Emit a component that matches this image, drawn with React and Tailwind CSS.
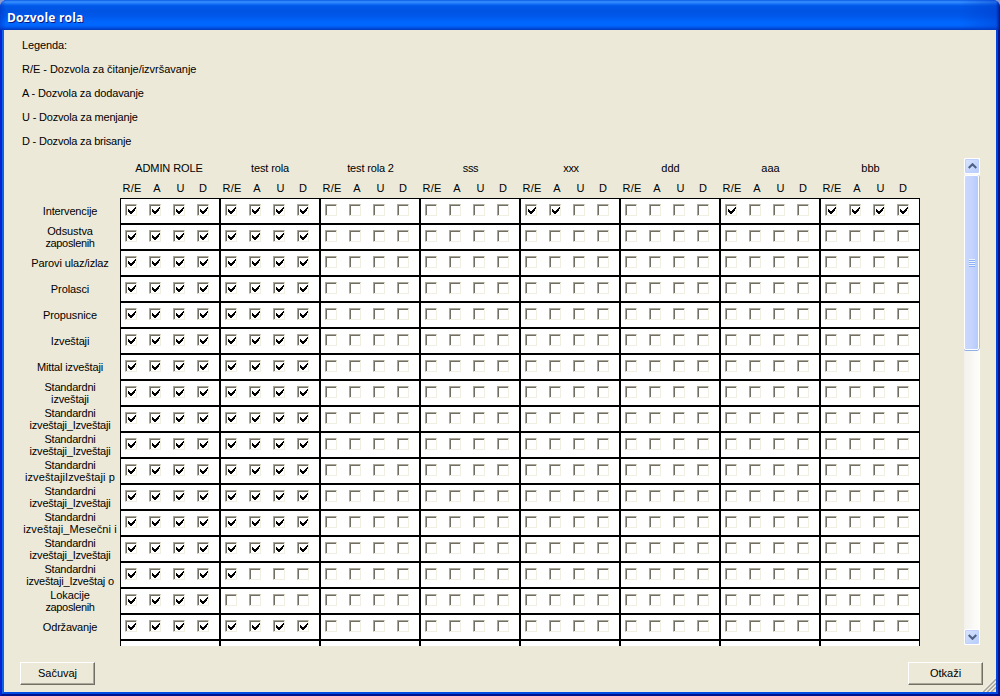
import React from "react";

const ROLES = [
  ["ADMIN ROLE", "pr-0.5 tracking-[-0.1px]"],
  ["test rola", "tracking-[-0.15px]"],
  ["test rola 2", "pl-px tracking-[-0.15px]"],
  ["sss", "pl-px tracking-[-0.4px]"],
  ["xxx", "pl-0.5 tracking-[-0.3px]"],
  ["ddd", "pl-px"],
  ["aaa", "pl-px"],
  ["bbb", "pl-px"],
];
const E = "0000";
const FULL = "1111";
const STANDARD = ["Standardni", "tracking-[-0.2px]"];
const REPORTS = ["izveštaji_Izveštaji", "tracking-[-0.22px]"];
const EMPLOYEES = ["zaposlenih", "tracking-[-0.35px]"];

const ROWS = [
  { lines: [["Intervencije", "tracking-[-0.15px]"]], marks: [FULL, FULL, E, E, "1100", E, "1000", FULL] },
  { lines: [["Odsustva", "tracking-[-0.1px]"], EMPLOYEES], marks: [FULL, FULL] },
  { lines: [["Parovi ulaz/izlaz", "tracking-[-0.12px]"]], marks: [FULL, FULL] },
  { lines: [["Prolasci", "tracking-[-0.1px]"]], marks: [FULL, FULL] },
  { lines: [["Propusnice", "tracking-[-0.1px]"]], marks: [FULL, FULL] },
  { lines: [["Izveštaji", "tracking-[-0.15px]"]], marks: [FULL, FULL] },
  { lines: [["Mittal izveštaji", "tracking-[-0.15px]"]], marks: [FULL, FULL] },
  { lines: [STANDARD, ["izveštaji", "tracking-[-0.15px]"]], marks: [FULL, FULL] },
  { lines: [STANDARD, REPORTS], marks: [FULL, FULL] },
  { lines: [STANDARD, REPORTS], marks: [FULL, FULL] },
  { lines: [STANDARD, ["izveštajiIzveštaji p", "tracking-[0.1px]"]], marks: [FULL, FULL] },
  { lines: [STANDARD, REPORTS], marks: [FULL, FULL] },
  { lines: [STANDARD, ["izveštaji_Mesečni i", "tracking-[0.1px]"]], marks: [FULL, FULL] },
  { lines: [STANDARD, REPORTS], marks: [FULL, FULL] },
  { lines: [STANDARD, ["izveštaji_Izveštaj o", "tracking-[-0.2px]"]], marks: [FULL, "1000"] },
  { lines: [["Lokacije", "tracking-[-0.1px]"], EMPLOYEES], marks: [FULL, E] },
  { lines: [["Održavanje", "tracking-[-0.2px]"]], marks: [FULL, FULL] },
  { lines: [], marks: [E, E], blank: true },
];

function Check({ on }) {
  return (
    <span className="block size-3 border border-t-[#aca899] border-l-[#aca899] border-r-[#f1efe2] border-b-[#f1efe2] bg-white">
      <span className="block size-[10px] border-t border-l border-[#716f64]">
        {on && (
          <svg className="ml-px mt-px block" width="8" height="7" viewBox="0 0 8 7" shapeRendering="crispEdges">
            <path d="M0 2h1v1h1v1h2v-1h1v-1h1v-1h1v-1h1v2h-1v2h-1v1h-1v1h-1v1h-2v-1h-1v-1h-1z" fill="#000" />
          </svg>
        )}
      </span>
    </span>
  );
}

function Cell({ marks, blank }) {
  return (
    <div className="flex h-[26px] w-[100px] gap-3 border border-black bg-white pl-1 pt-[5px]">
      {!blank && marks.split("").map((m, i) => <Check key={i} on={m === "1"} />)}
    </div>
  );
}

function RoleHeader({ name, className }) {
  return (
    <div className="w-[100px]">
      <div className={"h-5 text-center leading-5 " + className}>{name}</div>
      <div className="flex h-5 leading-5">
        <span className="w-6 text-center tracking-[0.2px]">R/E</span>
        <span className="w-[26px] text-center">A</span>
        <span className="w-[21px] text-center">U</span>
        <span className="w-6 text-center">D</span>
      </div>
    </div>
  );
}

function ScrollButton({ up }) {
  return (
    <div className="flex size-4 shrink-0 items-center justify-center rounded-[2px] border border-white bg-linear-to-br from-[#dbe5fe] to-[#b5cbfa] shadow-[inset_0_0_0_1px_#bfd0fd]">
      <svg width="9" height="6" viewBox="0 0 9 6">
        <path d={up ? "M.7 5L4.5 1.3L8.3 5" : "M.7 1L4.5 4.7L8.3 1"} fill="none" stroke="#4d6185" strokeWidth="2.2" />
      </svg>
    </div>
  );
}

function Scrollbar() {
  return (
    <div className="flex h-[487px] w-4 flex-col bg-linear-to-r from-[#f3f1ec] to-[#fefefb]">
      <ScrollButton up />
      <div className="mt-px flex h-[175px] w-[15px] flex-col items-center justify-center rounded-[2px] border border-white bg-linear-to-r from-[#c9d8fc] via-[#c5d4fd] to-[#b6cafa] shadow-[0_1px_0_#8fb0e2,1px_0_0_#a9c3ee]">
        {[0, 1, 2, 3].map((i) => (
          <span key={i} className="box-content h-px w-1.5 border-t border-[#eef4fe] bg-[#8cb0f8]" />
        ))}
      </div>
      <div className="grow" />
      <ScrollButton />
    </div>
  );
}

function Button({ children }) {
  return (
    <button className="flex h-[23px] w-[75px] items-center justify-center border border-t-white border-l-white border-r-[#716f64] border-b-[#716f64] bg-[#ece9d8] shadow-[inset_-1px_-1px_0_#aca899]">
      {children}
    </button>
  );
}

const LEGEND = [
  ["Legenda:", "tracking-[-0.1px]"],
  ["R/E - Dozvola za čitanje/izvršavanje", "tracking-[-0.03px]"],
  ["A - Dozvola za dodavanje", "tracking-[-0.12px]"],
  ["U - Dozvola za menjanje", "tracking-[-0.18px]"],
  ["D - Dozvola za brisanje", "tracking-[-0.2px]"],
];

export default function App() {
  return (
    <div className="h-[696px] w-[1000px] overflow-hidden bg-[#8a9bd0] font-['Liberation_Sans',Arial,sans-serif] text-[11px] text-black">
      <div className="flex h-full flex-col overflow-hidden rounded-t-[7px] bg-[#0831d9]">
        <header className="flex h-[30px] shrink-0 items-center bg-[linear-gradient(90deg,#0030c080_0px,#0030c000_6px,#0030c000_960px,#0038c870_996px,#001890_1000px),linear-gradient(180deg,#0a5ce6_0px,#3b91ff_2px,#1470f4_4px,#0058e8_6px,#0054e3_11px,#0057ea_16px,#0066fd_22px,#0068ff_25px,#005bf0_27px,#0042ce_29px,#003ab8_30px)] pl-[7px] pt-[5px]">
          <h1 className="whitespace-nowrap font-['Open_Sans',sans-serif] text-[12px] font-bold leading-4 tracking-[0.2px] text-white [text-shadow:1px_1px_0_#0a1883]">Dozvole rola</h1>
        </header>
        <div className="flex grow flex-col border-x-2 border-b-2 border-l-[#0424d0] border-r-[#00138c] border-b-[#00138c]">
          <div className="flex grow flex-col border-x-2 border-b-2 border-l-[#0f60e6] border-r-[#0044dc] border-b-[#004be4] bg-[#ece9d8]">
            <section className="flex h-[120px] flex-col pl-[18px] pt-[3px]">
              {LEGEND.map(([t, c]) => (
                <p key={t} className={"h-6 whitespace-nowrap leading-6 " + c}>{t}</p>
              ))}
            </section>
            <main className="mt-2 flex h-[488px] overflow-hidden">
              <div className="w-[916px]">
                <div className="flex h-10 pl-[116px]">
                  {ROLES.map(([r, c]) => <RoleHeader key={r} name={r} className={c} />)}
                </div>
                {ROWS.map((row, i) => (
                  <div key={i} className="flex h-[26px]">
                    <div className="flex w-[116px] flex-col justify-center pl-4 text-center leading-3">
                      {row.lines.map(([t, c], k) => (
                        <span key={k} className={"-mx-2 whitespace-nowrap " + c}>{t}</span>
                      ))}
                    </div>
                    {ROLES.map(([r], k) => <Cell key={r} marks={row.marks[k] || E} blank={row.blank} />)}
                  </div>
                ))}
              </div>
              <div className="ml-11"><Scrollbar /></div>
            </main>
            <footer className="flex h-[46px] items-start justify-between pl-4 pt-4">
              <Button>Sačuvaj</Button>
              <div className="flex">
                <Button>Otkaži</Button>
                <svg className="mt-4" width="13" height="14" viewBox="0 0 13 14">
                  <path d="M0 14L13 1M4 14L13 5M8 14L13 9" stroke="#aca899" strokeWidth="2" />
                  <path d="M-1.500 14L13 -.5M2.500 14L13 3.500M6.500 14L13 7.500" stroke="#fff" strokeWidth="1" />
                </svg>
              </div>
            </footer>
          </div>
        </div>
      </div>
    </div>
  );
}
